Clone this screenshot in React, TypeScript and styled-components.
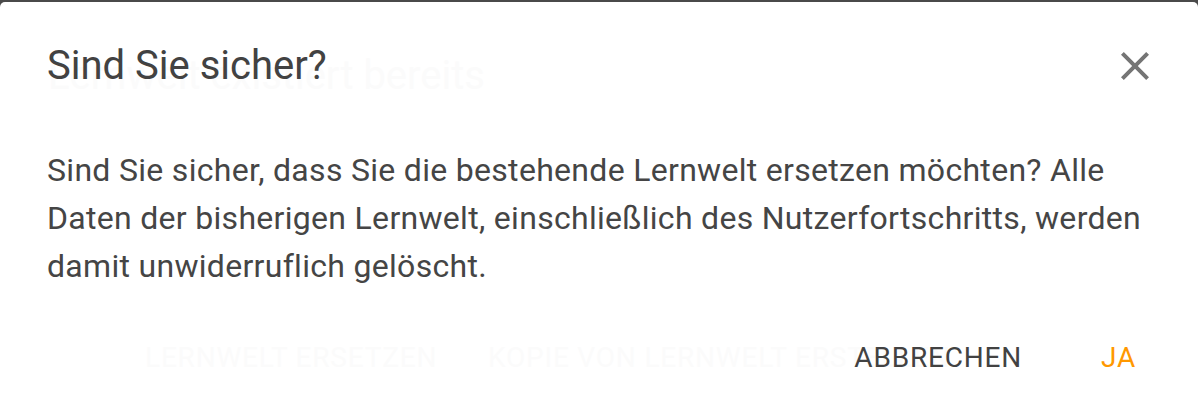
import React from "react";
import styled, { createGlobalStyle } from "styled-components";

const Global = createGlobalStyle`
  html, body { margin: 0; padding: 0; height: 100%; }
  body {
    background: #4a4a4a;
    font-family: Roboto, "Liberation Sans", Arial, sans-serif;
    overflow: hidden;
  }
  #root { height: 100%; }
`;

const Backdrop = styled.div`
  height: 406px;
  padding-top: 2px;
  box-sizing: border-box;
  display: flex;
  flex-direction: column;
`;

const Dialog = styled.section`
  position: relative;
  flex: 1;
  background: #ffffff;
  border-radius: 5px 5px 0 0;
  display: flex;
  flex-direction: column;
  overflow: hidden;
`;

const Header = styled.header`
  display: flex;
  align-items: center;
  justify-content: space-between;
  padding: 34px 39px 0 47px;
  height: 60px;
`;

const Title = styled.h2`
  margin: 0;
  font-family: Roboto, sans-serif;
  font-weight: 400;
  font-size: 40px;
  line-height: 60px;
  color: #424242;
  position: relative;
  z-index: 1;
`;

const CloseButton = styled.button`
  border: 0;
  background: none;
  padding: 0;
  width: 48px;
  height: 48px;
  display: flex;
  align-items: center;
  justify-content: center;
  cursor: pointer;
  color: #757575;
  position: relative;
  z-index: 1;
`;

const Body = styled.p`
  margin: 0;
  padding: 50px 47px 0 47px;
  font-size: 32px;
  line-height: 48px;
  letter-spacing: 0.00938em;
  color: #454545;
  position: relative;
  z-index: 1;
`;

const Actions = styled.footer`
  display: flex;
  justify-content: flex-end;
  align-items: center;
  padding: 42px 46px 0 0;
  position: relative;
  z-index: 1;
`;

const ActionButton = styled.button<{ $primary?: boolean }>`
  border: 0;
  background: none;
  font-family: Roboto, sans-serif;
  font-size: 28px;
  line-height: 36px;
  letter-spacing: 0.02857em;
  text-transform: uppercase;
  color: ${(p) => (p.$primary ? "#ff9800" : "#424242")};
  padding: 8px 16px;
  margin-left: ${(p) => (p.$primary ? "47px" : "0")};
  cursor: pointer;
`;

const GhostTitle = styled.div`
  position: absolute;
  top: 44px;
  left: 48px;
  font-size: 40px;
  line-height: 60px;
  color: #fbfbfb;
  white-space: nowrap;
  pointer-events: none;
  z-index: 0;
`;

const GhostLabel = styled.span<{ $left: number }>`
  position: absolute;
  top: 338px;
  left: ${(p) => p.$left}px;
  font-size: 28px;
  line-height: 36px;
  letter-spacing: 0.02857em;
  text-transform: uppercase;
  color: #fbfbfb;
  white-space: nowrap;
  pointer-events: none;
  z-index: 0;
`;

export default function App() {
  return (
    <>
      <Global />
      <Backdrop>
        <Dialog>
          <GhostTitle>Lernwelt existiert bereits</GhostTitle>
          <GhostLabel $left={145}>Lernwelt ersetzen</GhostLabel>
          <GhostLabel $left={488}>Kopie von Lernwelt erstellen</GhostLabel>
          <Header>
            <Title>Sind Sie sicher?</Title>
            <CloseButton aria-label="Schließen">
              <svg width="48" height="48" viewBox="0 0 24 24" fill="currentColor">
                <path d="M19 6.41 17.59 5 12 10.59 6.41 5 5 6.41 10.59 12 5 17.59 6.41 19 12 13.41 17.59 19 19 17.59 13.41 12z" />
              </svg>
            </CloseButton>
          </Header>
          <Body>
            Sind Sie sicher, dass Sie die bestehende Lernwelt ersetzen möchten? Alle
            Daten der bisherigen Lernwelt, einschließlich des Nutzerfortschritts, werden
            damit unwiderruflich gelöscht.
          </Body>
          <Actions>
            <ActionButton>Abbrechen</ActionButton>
            <ActionButton $primary>Ja</ActionButton>
          </Actions>
        </Dialog>
      </Backdrop>
    </>
  );
}
